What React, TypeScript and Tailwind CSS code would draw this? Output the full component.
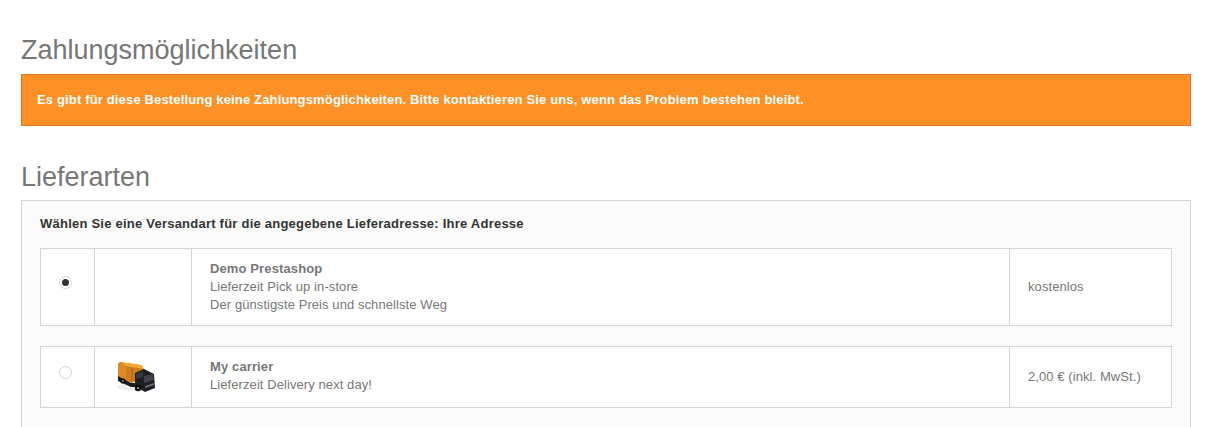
const truck = (
  <svg width="39" height="32" viewBox="0 0 39 32" className="block">
    <ellipse cx="19" cy="26" rx="18" ry="4" fill="#ececec" />
    {/* container */}
    <path d="M1 3 L3 1 L24 4 L27 8 L27 18 L14 22 L1 15 Z" fill="#cf7d1d" />
    <path d="M3 1 L24 4 L27 8 L9 5 Z" fill="#f6a92f" />
    <path d="M1 3 L3 1 L9 5 L9 18 L1 15 Z" fill="#e08a25" />
    <path d="M15 7 L15 20" stroke="#a9651a" strokeWidth="1" />
    <path d="M21 7 L21 19" stroke="#b87220" strokeWidth="1" />
    {/* chassis */}
    <path d="M1 15 L14 22 L18 22 L18 26 L14 26 L1 20 Z" fill="#1b1b1e" />
    {/* cab */}
    <path d="M18 12 L27 8 L37 13 L38 27 L28 31 L18 25 Z" fill="#1e1e22" />
    <path d="M27 15 L36 13 L37 19 L27 22 Z" fill="#3f4248" />
    <path d="M19 13 L26 10 L26 16 L19 18 Z" fill="#36383d" />
    <path d="M28 25 L37 22 L37 24 L28 27 Z" fill="#6b6d71" />
    <circle cx="6" cy="20" r="2.6" fill="#0e0e0e" />
    <circle cx="21" cy="27" r="3.2" fill="#0e0e0e" />
    <circle cx="21" cy="27" r="1.1" fill="#a0a0a0" />
    <circle cx="6" cy="20" r="0.9" fill="#8a8a8a" />
  </svg>
);

function CarrierRow({
  checked,
  name,
  lines,
  price,
  height,
  radioTop,
  logo,
}: {
  checked: boolean;
  name: string;
  lines: string[];
  price: string;
  height: string;
  radioTop: string;
  logo?: React.ReactNode;
}) {
  return (
    <div className={`flex bg-white border border-[#d6d4d4] ${height}`}>
      <div className={`w-[54px] shrink-0 border-r border-[#d6d4d4] flex justify-center pr-[4px] ${radioTop}`}>
        <span className="w-[13px] h-[13px] rounded-full border border-[#d6d4d4] flex items-center justify-center">
          {checked && <span className="w-[7px] h-[7px] rounded-full bg-[#333]" />}
        </span>
      </div>
      <div className="w-[97px] shrink-0 border-r border-[#d6d4d4] flex justify-center items-center pr-[14px]">{logo}</div>
      <div className="flex-1 border-r border-[#d6d4d4] pl-[18px] pt-[11px] leading-[18px]">
        <div className="font-bold tracking-[0.12px] text-[#777]">{name}</div>
        {lines.map((l) => (
          <div key={l}>{l}</div>
        ))}
      </div>
      <div className="w-[161px] shrink-0 pl-[18px] flex items-center">{price}</div>
    </div>
  );
}

export default function App() {
  return (
    <div className="w-[1211px] h-[427px] overflow-hidden bg-white px-[21px] pr-[20px] text-[#777] text-[13px] tracking-[0.08px] font-['Liberation_Sans',Arial,sans-serif]">
      <h2 className="text-[27px] tracking-normal leading-[30px] pt-[35px] text-[#777]">Zahlungsmöglichkeiten</h2>
      <div className="mt-[9px] h-[52px] bg-[#fe9126] border border-[#e4752b] text-white font-bold tracking-[0.155px] pl-[15px] flex items-center">
        Es gibt für diese Bestellung keine Zahlungsmöglichkeiten. Bitte kontaktieren Sie uns, wenn das Problem bestehen bleibt.
      </div>
      <h2 className="text-[27px] tracking-normal leading-[30px] mt-[36px] text-[#777]">Lieferarten</h2>
      <div className="mt-[8px] bg-[#fbfbfb] border border-[#d6d4d4] px-[18px] pb-[30px]">
        <div className="pt-[14px] leading-[18px] font-bold tracking-[0.23px] text-[#333]">
          Wählen Sie eine Versandart für die angegebene Lieferadresse: Ihre Adresse
        </div>
        <div className="mt-[15px] flex flex-col gap-[20px]">
          <CarrierRow
            checked
            name="Demo Prestashop"
            lines={["Lieferzeit Pick up in-store", "Der günstigste Preis und schnellste Weg"]}
            price="kostenlos"
            height="h-[78px]"
            radioTop="pt-[27px]"
          />
          <CarrierRow
            checked={false}
            name="My carrier"
            lines={["Lieferzeit Delivery next day!"]}
            price="2,00 € (inkl. MwSt.)"
            height="h-[62px]"
            radioTop="pt-[19px]"
            logo={truck}
          />
        </div>
      </div>
    </div>
  );
}
